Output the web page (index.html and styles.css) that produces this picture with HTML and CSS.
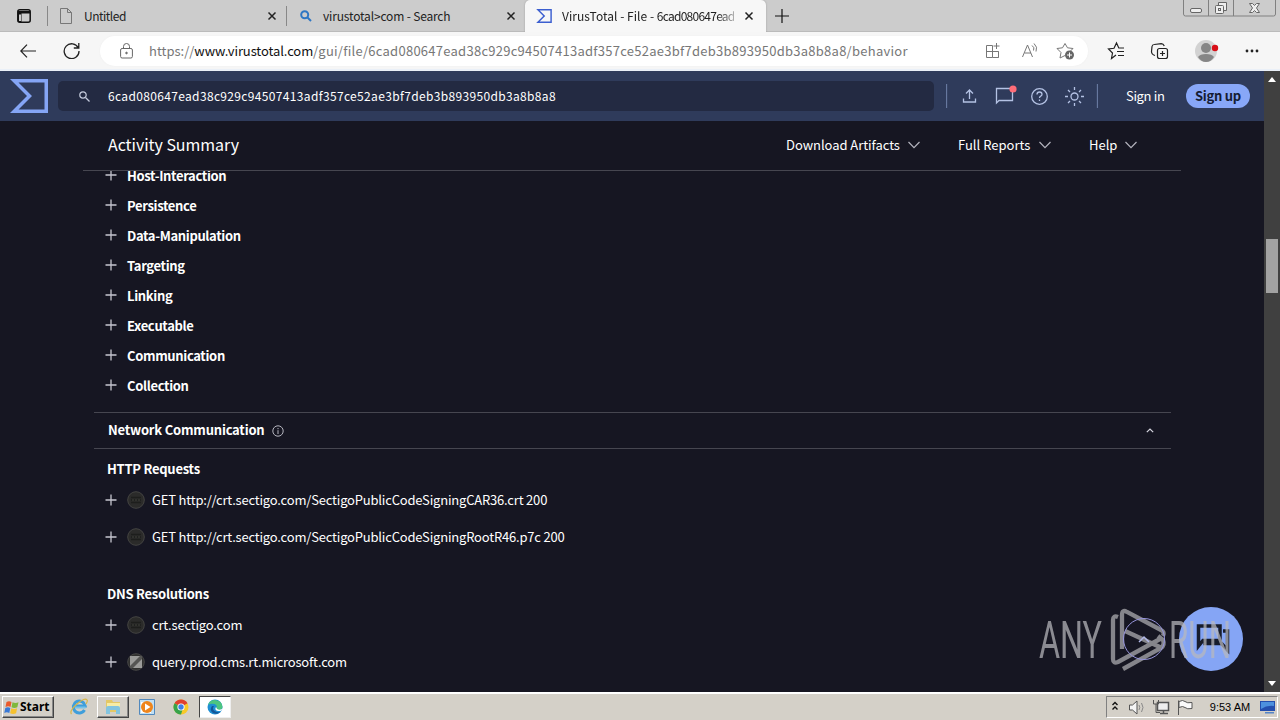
FILE: index.html
```html
<!DOCTYPE html>
<html lang="en">
<head>
<meta charset="utf-8">
<title>VirusTotal - File</title>
<link rel="stylesheet" href="styles.css">
</head>
<body>
<svg width="0" height="0" class="defs">
  <symbol id="x" viewBox="0 0 10 10"><path d="M1.5 1.5l7 7m0-7l-7 7"/></symbol>
  <symbol id="plus" viewBox="0 0 12 12"><path d="M6 .5v11M.5 6h11"/></symbol>
  <symbol id="down" viewBox="0 0 12 8"><path d="M.5 1L6 6.7 11.500 1"/></symbol>
  <symbol id="sigma" viewBox="0 0 38 34"><path fill-rule="evenodd" d="M0 0h38v34H0l17-17zM8.500 3.500L22 17 8.500 30.500H34.500v-27z"/></symbol>
  <symbol id="globe" viewBox="0 0 18 18"><circle cx="9" cy="9" r="8.300" fill="#2b2b2a" stroke="#444442"/><path d="M4 6.500h10M4 11.500h10M4 9h10" stroke="#1d1e1c" stroke-width="1.500"/><path d="M5 9h2m1 0h2m1 0h2" stroke="#42423d"/></symbol>
</svg>
<div class="tabs">
  <div class="workspace"><svg width="14" height="14" viewBox="0 0 14 14"><rect x=".8" y=".8" width="12.400" height="12.400" rx="2" fill="none" stroke="#111" stroke-width="1.500"/><path d="M1 2h12v2.500H1zM1 3h3.500v10H1z" fill="#111"/><path d="M2 5.500h2v6.500H2z" fill="#ccc"/></svg></div>
  <div class="tab t1"><svg width="12" height="16" viewBox="0 0 12 16" fill="none" stroke="#777"><path d="M.5 .5h7l4 4v11H.5zM7.500.5v4h4"/></svg><span>Untitled</span><svg class="x"><use href="#x"/></svg></div>
  <div class="tab t2"><svg width="12" height="12" viewBox="0 0 12 12" fill="none" stroke="#2f77c4" stroke-width="2"><circle cx="4.700" cy="4.700" r="3.500"/><path d="M7.500 7.500l3.500 3.500"/></svg><span>virustotal&gt;com - Search</span><svg class="x"><use href="#x"/></svg></div>
  <div class="tab t3"><svg width="16" height="14" fill="#3c5fd0"><use href="#sigma"/></svg><span class="fade">VirusTotal - File - <span class="hash">6cad080647ead</span></span><svg class="x"><use href="#x"/></svg></div>
  <div class="newtab"><svg width="14" height="14" viewBox="0 0 14 14" stroke="#111" stroke-width="1.200"><path d="M7 0v14M0 7h14"/></svg></div>
  <div class="winbtns">
    <svg width="94" height="17" viewBox="0 0 94 17" fill="none" stroke="#666"><path d="M.5 0v14q0 2 2 2h88q2 0 2-2V0M25.500 0v16M50.500 0v16" stroke="#808080"/><rect x="7.500" y="8.500" width="11" height="4" rx="1.500" fill="#eee"/><path d="M35.500 5V2.500h8v8H41" fill="#eee"/><rect x="32.500" y="5.500" width="8" height="8" rx="1" fill="#eee"/><rect x="35.500" y="8.500" width="2" height="2"/><path d="M66.500 3.500h3l2 2 2-2h3l-3 4.500 3 4.500h-3l-2-2-2 2h-3l3-4.500z" fill="#eee"/></svg>
  </div>
</div>
<div class="toolbar">
  <svg class="back" width="16" height="14" viewBox="0 0 16 14" fill="none" stroke="#222" stroke-width="1.200"><path d="M16 7H1M7 .7L.8 7 7 13.300"/></svg>
  <svg class="reload" width="17" height="17" viewBox="0 0 17 17" fill="none" stroke="#222" stroke-width="1.300"><path d="M15.300 6A7.400 7.400 0 1 0 16 9M15.800 1v5h-5"/></svg>
  <div class="url">
    <svg width="13" height="16" viewBox="0 0 13 16" fill="none" stroke="#666"><rect x=".6" y="5.500" width="11.800" height="9.500" rx="1.500"/><path d="M3.500 5.500V3.500a3 3 0 0 1 6 0v2"/><circle cx="6.500" cy="10" r=".8" fill="#666"/></svg>
    <div class="addr"><span class="u1">https://</span><span class="u2">www.virustotal.com</span><span class="u3">/gui/file/6cad080647ead38c929c94507413adf357ce52ae3bf7deb3b893950db3a8b8a8/behavior</span></div>
    <svg class="uic" width="92" height="18" viewBox="0 0 92 18" fill="none" stroke="#777"><path d="M1.500 3.500h6v12h-6zM1.500 9.500h12v6h-6M13.500 9.500v6M11.500 1v6M8.500 4h6"/><path d="M37.500 15L42.500 3l5 12M39.500 11h6.500M47 3.500q3 2 1.500 5M49 1.500q4 3.500 2 8"/><path d="M80 13.500l-5 2.500 1-5.500-4-4 5.500-.7L80 1.500l2.500 4.300 5.500.7-3 3"/><circle cx="84.500" cy="13" r="4.500" fill="#666" stroke="none"/><path d="M84.500 10.500v5M82 13h5" stroke="#fff"/></svg>
  </div>
  <svg class="tools" width="156" height="24" viewBox="0 0 156 24" fill="none" stroke="#222" stroke-width="1.200"><path d="M11 16l-4.500 3.500L7.500 14 3.500 10l5.500-.7L11.500 4l2.300 5H19M12 12.500h7M13 16.500h6"/><rect x="52.500" y="9.500" width="10" height="10" rx="2" /><path d="M57.500 12v5M55 14.500h5M50 16.500q-3.500-1-3.500-4l.5-5q.3-2 2.300-2l7-.8q2 0 3 2.300"/><circle cx="101" cy="12" r="11" fill="#d2d2d2" stroke="none"/><circle cx="101" cy="9" r="5" fill="#868686" stroke="none"/><path d="M93 18q2-3 8-3t8 3q-3 5-8 5t-8-5" fill="#868686" stroke="none"/><circle cx="110" cy="9" r="3.200" fill="#d80f18" stroke="none"/><g fill="#222" stroke="none"><circle cx="142" cy="12" r="1.400"/><circle cx="147" cy="12" r="1.400"/><circle cx="152" cy="12" r="1.400"/></g></svg>
</div>
<div class="page">
  <div class="main">
    <header class="vt">
      <svg class="logo" width="38" height="34"><use href="#sigma"/></svg>
      <div class="search"><svg width="11" height="11" viewBox="0 0 11 11" fill="none" stroke="#c5cbdc" stroke-width="1.200"><circle cx="4" cy="4" r="3.200"/><path d="M6.500 6.500l4 4"/></svg><span>6cad080647ead38c929c94507413adf357ce52ae3bf7deb3b893950db3a8b8a8</span></div>
      <svg class="vic" width="152" height="26" viewBox="0 0 152 26" fill="none" stroke="#b4c2e4" stroke-width="1.300"><path d="M.5 1v24M151.500 1v24" stroke="#67789f"/><path d="M17.500 15.500v3.500h12v-3.500M23.500 16V7M20 10.500L23.500 7l3.500 3.500"/><path d="M50.500 20V5.500h16v12H53z"/><circle cx="67" cy="6" r="3.600" fill="#ff6d78" stroke="none"/><circle cx="93.500" cy="13.500" r="7.800"/><path d="M91 11.500q0-2.500 2.500-2.500T96 11.300q0 1.300-1.300 1.900-1.200.5-1.200 1.800M93.500 16.500v1.600"/><circle cx="128.500" cy="13.500" r="3.500"/><path d="M128.500 4v3M128.500 20v3M119 13.500h3M135 13.500h3M122 7l2 2M133 18l2 2M122 20l2-2M133 9l2-2"/></svg>
      <span class="signin">Sign in</span><span class="signup"><b>Sign up</b></span>
    </header>
    <div class="summary">
      <h1>Activity Summary</h1>
      <div class="menu m1"><span>Download Artifacts</span><svg><use href="#down"/></svg></div>
      <div class="menu m2"><span>Full Reports</span><svg><use href="#down"/></svg></div>
      <div class="menu m3"><span>Help</span><svg><use href="#down"/></svg></div>
    </div>
    <div class="list">
      <div class="item"><svg><use href="#plus"/></svg><span>Host-Interaction</span></div>
      <div class="item"><svg><use href="#plus"/></svg><span>Persistence</span></div>
      <div class="item"><svg><use href="#plus"/></svg><span>Data-Manipulation</span></div>
      <div class="item"><svg><use href="#plus"/></svg><span>Targeting</span></div>
      <div class="item"><svg><use href="#plus"/></svg><span>Linking</span></div>
      <div class="item"><svg><use href="#plus"/></svg><span>Executable</span></div>
      <div class="item"><svg><use href="#plus"/></svg><span>Communication</span></div>
      <div class="item"><svg><use href="#plus"/></svg><span>Collection</span></div>
    </div>
    <div class="section"><span>Network Communication</span><svg width="12" height="12" viewBox="0 0 12 12" fill="none" stroke="#b5b5bf"><circle cx="6" cy="6" r="5.200"/><path d="M6 5.200v3.800M6 3v1.200"/></svg><svg class="up" width="8" height="5" viewBox="0 0 8 5" fill="none" stroke="#d5d5df" stroke-width="1.200"><path d="M.8 4.200L4 1l3.200 3.200"/></svg></div>
    <h2 class="http">HTTP Requests</h2>
    <div class="row"><svg class="p"><use href="#plus"/></svg><svg class="g"><use href="#globe"/></svg><span>GET http://crt.sectigo.com/SectigoPublicCodeSigningCAR36.crt 200</span></div>
    <div class="row"><svg class="p"><use href="#plus"/></svg><svg class="g"><use href="#globe"/></svg><span>GET http://crt.sectigo.com/SectigoPublicCodeSigningRootR46.p7c 200</span></div>
    <h2 class="dns">DNS Resolutions</h2>
    <div class="row"><svg class="p"><use href="#plus"/></svg><svg class="g"><use href="#globe"/></svg><span>crt.sectigo.com</span></div>
    <div class="row"><svg class="p"><use href="#plus"/></svg><svg class="g" viewBox="0 0 18 18"><circle cx="9" cy="9" r="8.300" fill="#30302f" stroke="#484847"/><path d="M3 3h12v12H3z" fill="#9b9b99"/><path d="M3 13v2h3l9-9V3h-2z" fill="#555553"/></svg><span>query.prod.cms.rt.microsoft.com</span></div>
  </div>
  <div class="scroll"><svg width="8" height="5"><path d="M0 5L4 0l4 5z" fill="#fff"/></svg><div class="thumb"></div><svg width="8" height="5"><path d="M0 0h8L4 5z" fill="#fff"/></svg></div>
</div>
<svg class="floating" width="210" height="70" viewBox="0 0 210 70">
  <circle cx="177" cy="35" r="32" fill="#85a5f5"/>
  <path d="M164.500 42V22H186v14.500h-17zM189 27h4.500v19l-6-6.500H171v-4" fill="none" stroke="#171c2c" stroke-width="3.500"/>
  <path d="M84 13q-5-2-5 3v39q0 5 5 3l42-23M88 45V11q0-6 5-3l34 18q4 2 2 6M91 27l37 17M89 65l38-21q4-3 2-8l-5-4" fill="none" stroke="#85858b" stroke-width="4.300"/>
  <circle cx="110" cy="35" r="20.500" fill="none" stroke="#9695dc"/><path d="M105 38l5-5 5 5" fill="none" stroke="#b2b9e8" stroke-width="1.500"/>
  <g class="mark"><text x="5" y="54" textLength="63" lengthAdjust="spacingAndGlyphs">ANY</text><text x="135" y="54" textLength="62" lengthAdjust="spacingAndGlyphs">RUN</text></g>
</svg>
<div class="taskbar">
  <div class="start"><svg width="16" height="15" viewBox="0 0 16 15"><path d="M2.500 2q2.500-1.500 5 0L6.500 7q-2-1.500-5 0z" fill="#ea5a2b"/><path d="M8.500 2.300q3 1.500 6 0l-1.200 5q-3 1.500-5.800 0z" fill="#7fb83b"/><path d="M1.300 8q2.500-1.400 5 0l-1 5q-2.500-1.500-5 0z" fill="#3979d6"/><path d="M7.300 8.300q3 1.500 5.800 0l-1 5q-3 1.500-6 0z" fill="#f5c12f"/></svg><b>Start</b></div>
  <div class="app ie"><svg width="18" height="18" viewBox="0 0 18 18" fill="none"><path d="M14.500 12a6 6 0 1 1 .7-4H5" stroke="#3f9edb" stroke-width="3"/><path d="M5 9.500h10.500" stroke="#75c3eb" stroke-width="2"/><path d="M1.500 16Q-1 13 7 6t10-4q1 1-1 4" stroke="#d9b647" stroke-width="1.200"/></svg></div>
  <div class="app raised"><svg width="18" height="16" viewBox="0 0 18 16"><path d="M2 1h6l1 2h7v10H2z" fill="#e4c866"/><path d="M3 4h13v6H3z" fill="#f7eca5"/><path d="M2 15V9q0-2 2-2h10q2 0 2 2v6h-4v-4H6v4z" fill="#83c4df"/></svg></div>
  <div class="app media"><svg width="16" height="16" viewBox="0 0 16 16"><path d="M.5.5h15v15H.5z" fill="#c1e0f4" stroke="#5289bd"/><path d="M2 3h10v11H2z" fill="#fff"/><circle cx="8" cy="8" r="6" fill="#ee851c"/><path d="M6 4.500L11.500 8 6 11.500z" fill="#fff"/></svg></div>
  <div class="app chrome"><svg width="16" height="16" viewBox="0 0 16 16"><circle cx="8" cy="8" r="7.500" fill="#f7c928"/><path d="M8 8L1.500 4.200a7.500 7.500 0 0 1 13 0z" fill="#df402f"/><path d="M8 8L1.500 4.200A7.500 7.500 0 0 0 8 15.500L10 9z" fill="#37a34a"/><circle cx="8" cy="8" r="3.600" fill="#fff"/><circle cx="8" cy="8" r="2.700" fill="#3e7fe5"/></svg></div>
  <div class="app active"><svg width="16" height="16" viewBox="0 0 16 16"><circle cx="8" cy="8" r="7.500" fill="#1e8fd4"/><path d="M1 6a7.500 7.500 0 0 1 14.500 2q-.5 3-4 3-3 0-2-2 1-3-2-4-4-1-6.500 1z" fill="#4dc580"/><path d="M5 7q-3 4 1 7 4 2 7.500-1-4 1-6.500-1.500Q5 9.500 7 7z" fill="#135698"/><path d="M9 8q-2 3 2 4 2 .3 3.500-.6Q16 9 15 10q-5 2-6-2z" fill="#fff"/></svg></div>
  <div class="tray"><svg width="88" height="18" viewBox="0 0 88 18" fill="none" stroke="#555"><path d="M2.500 7L5 4.500 7.500 7M2.500 11.500L5 9l2.500 2.500" stroke="#111" stroke-width="1.400"/><path d="M19.500 7h3l4.500-4v13l-4.500-4h-3z" fill="#f4f4f4"/><path d="M29 7q1.500 2.500 0 5M31.500 5q3 4.500 0 9" stroke="#888"/><rect x="47.500" y="4.500" width="11" height="8" fill="#eee" stroke-width="1.500"/><path d="M50 15.500h8M53.500 13v2" stroke-width="1.500"/><path d="M43.500 2v4h5V2M46 6v8.500h4" stroke="#555"/><path d="M68.500 17V2.500M69 3.500q4-2 6 0 2 2 7 1v6q-5 1-7-1-2-2-6 0z" fill="#fafafa"/></svg><span>9:53 AM</span><svg width="15" height="13" viewBox="0 0 15 13"><path d="M0 0h15v10H0z" fill="#244fae"/><path d="M1 1h13v4Q7 4 1 8z" fill="#4d91de"/><path d="M5 11h9v1.500H5z" fill="#5485c7"/></svg></div>
</div>
</body>
</html>
```
FILE: styles.css
```css
* { box-sizing: border-box; }
body { margin: 0; width: 1280px; height: 720px; overflow: hidden; display: flex; flex-direction: column; background: #161622; font: 13px/20px "Noto Sans CJK SC", "Noto Sans", sans-serif; }
span, b, h1, h2 { white-space: nowrap; }
svg { flex: none; display: block; }
.defs { position: absolute; }
.tabs { height: 32px; flex: none; background: #ccc; display: flex; align-items: center; border-bottom: 1px solid #bbb; font-size: 12px; color: #222; }
.workspace { width: 47px; padding-left: 17px; }
.tab { height: 20px; border-left: 1px solid #888; display: flex; align-items: center; flex: none; }
.tab > span { flex: 1; min-width: 0; }
.x { width: 10px; height: 10px; stroke: #222; stroke-width: 1.500; }
.t1 { width: 239px; padding: 0 9px 0 12px; gap: 12px; letter-spacing: -.5px; }
.t2 { width: 239px; padding: 0 9px 0 13px; gap: 11px; letter-spacing: -.17px; }
.t3 { width: 241px; height: 32px; align-self: flex-start; background: #f7f7f7; border: 0; border-radius: 5px 5px 0 0; padding: 0 12px 0 11px; gap: 10px; box-shadow: 0 0 2px #999; clip-path: inset(0 -3px 0 -3px); }
.t3 > .fade { -webkit-mask-image: linear-gradient(90deg, #000 90%, #0005); mask-image: linear-gradient(90deg, #000 90%, #0005); letter-spacing: .03px; }
.hash { letter-spacing: -.75px; }
.newtab { padding-left: 9px; }
.winbtns { margin: 0 3px 0 auto; align-self: flex-start; }
.toolbar { height: 39px; flex: none; background: #f6f6f6; border-bottom: 2px solid #eaf0f8; display: flex; align-items: center; }
.back { margin-left: 20px; }
.reload { margin-left: 27px; }
.url { margin-left: 20px; width: 988px; height: 30px; border-radius: 15px; background: #fff; display: flex; align-items: center; padding-left: 20px; box-shadow: 0 0 2px #eee; }
.addr { margin-left: 16px; width: 836px; color: #777; display: flex; }
.u2 { color: #111; letter-spacing: -.1px; }
.u3 { letter-spacing: .26px; }
.tools { margin-left: 17px; }
.page { height: 621px; flex: none; display: flex; }
.main { width: 1264px; height: 621px; overflow: hidden; color: #fff; }
.scroll { width: 16px; background: #404040; display: flex; flex-direction: column; align-items: center; padding: 6px 0; }
.thumb { width: 12px; height: 54px; background: #a2a2a2; margin: 157px 0 auto; }
.vt { height: 50px; background: #2f3b5b; display: flex; align-items: center; padding-left: 10px; }
.logo { fill: #85a5f5; }
.search { margin-left: 10px; width: 876px; height: 30px; border-radius: 5px; background: #232a42; display: flex; align-items: center; padding-left: 21px; gap: 18px; font-size: 12px; letter-spacing: .34px; }
.vic { margin-left: 12px; }
.signin { margin-left: 28px; width: 39px; letter-spacing: -.35px; }
.signup { margin-left: 21px; width: 64px; height: 24px; border-radius: 12px; background: #88a7f8; color: #151c33; display: flex; align-items: center; justify-content: center; letter-spacing: -.25px; }
.summary { height: 50px; margin: 0 83px; border-bottom: 1px solid #464650; padding: 0 44px 2px 25px; display: flex; align-items: center; }
.summary h1 { font-size: 16px; font-weight: 400; margin: 0 auto 0 0; padding-bottom: 2px; letter-spacing: -.05px; }
.menu { display: flex; align-items: center; justify-content: space-between; }
.menu svg { width: 12px; height: 8px; fill: none; stroke: #b4b4be; stroke-width: 1.200; }
.m1 { width: 134px; letter-spacing: -.05px; }
.m2 { width: 93px; margin-left: 38px; }
.m3 { width: 48px; margin-left: 38px; }
.list { margin-top: -6px; height: 247px; padding-left: 105px; clip-path: inset(6px 0 0 0); }
.item { height: 30px; display: flex; align-items: flex-start; gap: 10px; font-weight: 700; letter-spacing: -.34px; }
.item span { padding-top: 1px; }
.item svg, .p { width: 12px; height: 12px; stroke: #c6c6cf; stroke-width: 1.300; }
.item svg { margin-top: 4px; }
.section { height: 37px; margin: 0 93px 0 94px; border: solid #464650; border-width: 1px 0; display: flex; align-items: center; gap: 8px; padding: 0 17px 0 14px; font-weight: 700; letter-spacing: -.2px; }
.section span { padding-bottom: 1px; }
.up { margin-left: auto; }
h2 { font-size: 13px; line-height: 20px; font-weight: 700; margin: 0; padding-left: 107px; letter-spacing: -.25px; }
.http { padding-top: 10px; margin-bottom: 2px; }
.dns { margin-top: 29px; margin-bottom: 2px; }
.row { height: 37px; display: flex; align-items: center; padding-left: 105px; letter-spacing: -.19px; }
.g { width: 18px; height: 18px; margin: 0 7px 0 10px; }
.floating { position: absolute; left: 1034px; top: 604px; }
.mark { font: 51px Roboto, sans-serif; font-weight: 400; fill: #b9b9bd; opacity: .72; }
.taskbar { height: 28px; flex: none; background: #d4d0c8; border-top: 2px solid #fff; display: flex; align-items: center; padding-left: 2px; color: #000; }
.start { width: 52px; height: 22px; border: 1px solid #fff; border-right-color: #444; border-bottom-color: #444; box-shadow: inset -1px -1px #888; display: flex; align-items: center; font: 12px/20px "Noto Sans", sans-serif; padding-left: 1px; }
.app { height: 22px; width: 32px; display: flex; align-items: center; justify-content: center; flex: none; }
.ie { margin-left: 9px; }
.raised { margin-left: 2px; border: 1px solid #fff; border-right-color: #444; border-bottom-color: #444; box-shadow: inset -1px -1px #888; }
.media, .chrome { margin-left: 2px; }
.active { background: #fff; margin-left: 2px; border: 1px solid #444; border-right-color: #eee; border-bottom-color: #eee; }
.tray { margin: 0 2px 0 auto; width: 172px; height: 22px; border: 1px solid #808080; border-right-color: #fff; border-bottom-color: #fff; display: flex; align-items: center; padding: 0 2px 0 3px; font: 11px/20px "Liberation Sans", sans-serif; }
.tray span { margin: 0 auto; padding-left: 2px; }
```
